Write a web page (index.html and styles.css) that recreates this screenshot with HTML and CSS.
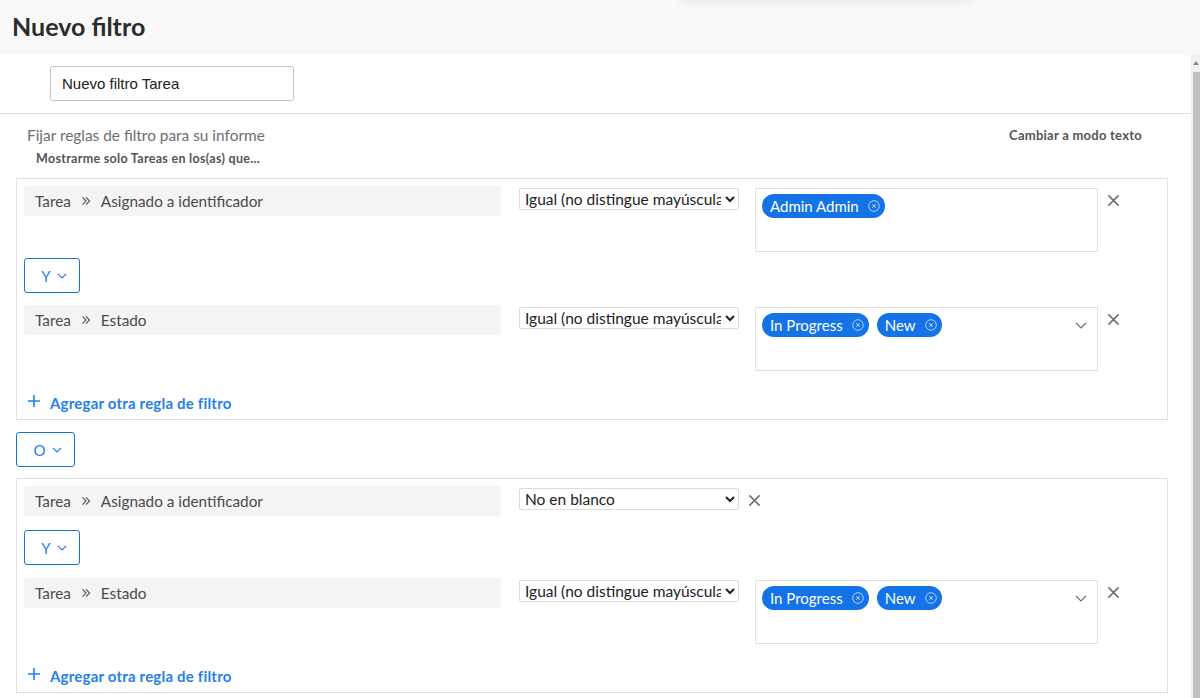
FILE: index.html
```html
<!DOCTYPE html>
<html lang="es">
<head>
<meta charset="utf-8">
<title>Nuevo filtro</title>
<link rel="stylesheet" href="styles.css">
</head>
<body>
<div class="page">
  <header class="header">
    <h1 class="title">Nuevo filtro</h1>
    <div class="ghost-popover"></div>
  </header>
  <div class="main">
    <div class="content">
      <div class="name-row">
        <input class="name-input" type="text" value="Nuevo filtro Tarea">
      </div>
      <div class="rules-head">
        <div class="rules-head-top">
          <span class="rules-title">Fijar reglas de filtro para su informe</span>
          <a class="text-mode">Cambiar a modo texto</a>
        </div>
        <div class="rules-sub">Mostrarme solo Tareas en los(as) que...</div>
      </div>

      <section class="group">
        <div class="rule">
          <div class="field">
            <span>Tarea</span>
            <svg class="dchev" viewBox="0 0 10 10" width="10" height="10"><path d="M1.5 1.3l3.6 3.7-3.6 3.7M5 1.3l3.6 3.7-3.6 3.7" fill="none" stroke="#555" stroke-width="1.1"/></svg>
            <span>Asignado a identificador</span>
          </div>
          <select class="op"><option>Igual (no distingue mayúsculas/minúsculas)</option></select>
          <div class="values">
            <div class="chips">
              <span class="chip">Admin Admin<svg class="chip-x" viewBox="0 0 12 12" width="12" height="12"><circle cx="6" cy="6" r="5.3" fill="none" stroke="#fff" stroke-opacity=".75" stroke-width=".9"/><path d="M4.2 4.2l3.6 3.6M7.8 4.2l-3.6 3.6" stroke="#fff" stroke-opacity=".85" stroke-width=".9"/></svg></span>
            </div>
          </div>
          <svg class="remove" viewBox="0 0 14 14" width="14" height="14"><path d="M1.5 1.5l11 11M12.5 1.5l-11 11" stroke="#6e6e6e" stroke-width="1.6"/></svg>
        </div>
        <button class="conj">Y<svg class="conj-chev" viewBox="0 0 10 6" width="10" height="6"><path d="M1 1l4 4 4-4" fill="none" stroke="#2680eb" stroke-width="1.2"/></svg></button>
        <div class="rule">
          <div class="field">
            <span>Tarea</span>
            <svg class="dchev" viewBox="0 0 10 10" width="10" height="10"><path d="M1.5 1.3l3.6 3.7-3.6 3.7M5 1.3l3.6 3.7-3.6 3.7" fill="none" stroke="#555" stroke-width="1.1"/></svg>
            <span>Estado</span>
          </div>
          <select class="op"><option>Igual (no distingue mayúsculas/minúsculas)</option></select>
          <div class="values">
            <div class="chips">
              <span class="chip">In Progress<svg class="chip-x" viewBox="0 0 12 12" width="12" height="12"><circle cx="6" cy="6" r="5.3" fill="none" stroke="#fff" stroke-opacity=".75" stroke-width=".9"/><path d="M4.2 4.2l3.6 3.6M7.8 4.2l-3.6 3.6" stroke="#fff" stroke-opacity=".85" stroke-width=".9"/></svg></span>
              <span class="chip">New<svg class="chip-x" viewBox="0 0 12 12" width="12" height="12"><circle cx="6" cy="6" r="5.3" fill="none" stroke="#fff" stroke-opacity=".75" stroke-width=".9"/><path d="M4.2 4.2l3.6 3.6M7.8 4.2l-3.6 3.6" stroke="#fff" stroke-opacity=".85" stroke-width=".9"/></svg></span>
            </div>
            <svg class="caret" viewBox="0 0 12 7" width="12" height="7"><path d="M1 1l5 5 5-5" fill="none" stroke="#6e6e6e" stroke-width="1.2"/></svg>
          </div>
          <svg class="remove" viewBox="0 0 14 14" width="14" height="14"><path d="M1.5 1.5l11 11M12.5 1.5l-11 11" stroke="#6e6e6e" stroke-width="1.6"/></svg>
        </div>
        <a class="add-rule"><svg class="plus" viewBox="0 0 12 12" width="12" height="12"><path d="M6 0v12M0 6h12" stroke="#2680eb" stroke-width="1.6"/></svg>Agregar otra regla de filtro</a>
      </section>

      <button class="conj conj-or">O<svg class="conj-chev" viewBox="0 0 10 6" width="10" height="6"><path d="M1 1l4 4 4-4" fill="none" stroke="#2680eb" stroke-width="1.2"/></svg></button>

      <section class="group">
        <div class="rule rule-short">
          <div class="field">
            <span>Tarea</span>
            <svg class="dchev" viewBox="0 0 10 10" width="10" height="10"><path d="M1.5 1.3l3.6 3.7-3.6 3.7M5 1.3l3.6 3.7-3.6 3.7" fill="none" stroke="#555" stroke-width="1.1"/></svg>
            <span>Asignado a identificador</span>
          </div>
          <select class="op"><option>No en blanco</option></select>
          <svg class="remove" viewBox="0 0 14 14" width="14" height="14"><path d="M1.5 1.5l11 11M12.5 1.5l-11 11" stroke="#6e6e6e" stroke-width="1.6"/></svg>
        </div>
        <button class="conj conj-last">Y<svg class="conj-chev" viewBox="0 0 10 6" width="10" height="6"><path d="M1 1l4 4 4-4" fill="none" stroke="#2680eb" stroke-width="1.2"/></svg></button>
        <div class="rule">
          <div class="field">
            <span>Tarea</span>
            <svg class="dchev" viewBox="0 0 10 10" width="10" height="10"><path d="M1.5 1.3l3.6 3.7-3.6 3.7M5 1.3l3.6 3.7-3.6 3.7" fill="none" stroke="#555" stroke-width="1.1"/></svg>
            <span>Estado</span>
          </div>
          <select class="op"><option>Igual (no distingue mayúsculas/minúsculas)</option></select>
          <div class="values">
            <div class="chips">
              <span class="chip">In Progress<svg class="chip-x" viewBox="0 0 12 12" width="12" height="12"><circle cx="6" cy="6" r="5.3" fill="none" stroke="#fff" stroke-opacity=".75" stroke-width=".9"/><path d="M4.2 4.2l3.6 3.6M7.8 4.2l-3.6 3.6" stroke="#fff" stroke-opacity=".85" stroke-width=".9"/></svg></span>
              <span class="chip">New<svg class="chip-x" viewBox="0 0 12 12" width="12" height="12"><circle cx="6" cy="6" r="5.3" fill="none" stroke="#fff" stroke-opacity=".75" stroke-width=".9"/><path d="M4.2 4.2l3.6 3.6M7.8 4.2l-3.6 3.6" stroke="#fff" stroke-opacity=".85" stroke-width=".9"/></svg></span>
            </div>
            <svg class="caret" viewBox="0 0 12 7" width="12" height="7"><path d="M1 1l5 5 5-5" fill="none" stroke="#6e6e6e" stroke-width="1.2"/></svg>
          </div>
          <svg class="remove" viewBox="0 0 14 14" width="14" height="14"><path d="M1.5 1.5l11 11M12.5 1.5l-11 11" stroke="#6e6e6e" stroke-width="1.6"/></svg>
        </div>
        <a class="add-rule"><svg class="plus" viewBox="0 0 12 12" width="12" height="12"><path d="M6 0v12M0 6h12" stroke="#2680eb" stroke-width="1.6"/></svg>Agregar otra regla de filtro</a>
      </section>
    </div>
    <div class="scrollbar">
      <div class="sb-up"><svg viewBox="0 0 6 4" width="6" height="4"><path d="M3 0L6 4H0z" fill="#8a8a8a"/></svg></div>
      <div class="sb-thumb"></div>
    </div>
  </div>
</div>
</body>
</html>
```

FILE: styles.css
```css
* { box-sizing: border-box; }
html, body { margin: 0; padding: 0; }
body {
  font-family: Lato, "Open Sans", sans-serif;
  color: #4b4b4b;
  background: #fff;
  overflow: hidden;
}
.page {
  width: 1200px;
  height: 698px;
  display: flex;
  flex-direction: column;
  overflow: hidden;
}
.header {
  position: relative;
  height: 55px;
  flex: none;
  background: #f9f9f9;
  display: flex;
  align-items: center;
  padding-left: 12px;
}
.title {
  margin: 0;
  font-size: 25px;
  font-weight: 700;
  color: #2c2c2c;
  padding-bottom: 4px;
}
.ghost-popover {
  position: absolute;
  left: 680px;
  top: -12px;
  width: 290px;
  height: 12px;
  box-shadow: 0 2px 8px rgba(0,0,0,0.07);
  background: #f9f9f9;
}
.main {
  flex: 1;
  display: flex;
  min-height: 0;
}
.content {
  flex: 1;
  min-width: 0;
}
.scrollbar {
  width: 9px;
  flex: none;
  background: #f1f1f1;
  display: flex;
  flex-direction: column;
}
.sb-up {
  height: 17px;
  display: flex;
  justify-content: flex-end;
  padding-top: 6px;
  padding-right: 1px;
}
.sb-up svg { display: block; }
.sb-thumb {
  flex: 1;
  margin-left: 2px;
  background: #c1c1c1;
}
.name-row {
  height: 59px;
  padding: 11px 0 0 50px;
  border-bottom: 1px solid #e1e1e1;
}
.name-input {
  width: 244px;
  height: 35px;
  border: 1px solid #c4c4c4;
  border-radius: 3px;
  padding: 0 11px;
  font-family: "Liberation Sans", Arial, sans-serif;
  font-size: 15px;
  color: #222;
  outline: none;
}
.rules-head {
  padding: 11px 49px 0 27px;
}
.rules-head-top {
  display: flex;
  justify-content: space-between;
  align-items: center;
  height: 20px;
}
.rules-title {
  font-size: 15.4px;
  color: #6e6e6e;
}
.text-mode {
  font-size: 13px;
  letter-spacing: 0.25px;
  font-weight: 700;
  color: #555;
}
.rules-sub {
  margin-top: 6px;
  padding-left: 9px;
  font-size: 12.5px;
  letter-spacing: 0.3px;
  font-weight: 700;
  color: #555;
  line-height: 16px;
}
.group {
  margin: 11px 23px 0 16px;
  border: 1px solid #e1e1e1;
  padding: 7px 7px 6px;
}
.rule {
  display: flex;
  align-items: flex-start;
}
.rule-short { min-height: 38px; }
.field {
  width: 477px;
  height: 30px;
  flex: none;
  background: #f4f4f4;
  border-radius: 3px;
  padding-left: 11px;
  display: flex;
  align-items: center;
  gap: 10px;
  font-size: 15.3px;
  color: #4b4b4b;
}
.dchev { display: block; flex: none; }
.op {
  margin: 2px 0 0 18px;
  width: 220px;
  height: 22px;
  flex: none;
  border: 1px solid #dcdcdc;
  border-radius: 2px;
  background: #fff;
  font-family: Lato, "Open Sans", sans-serif;
  font-size: 15.5px;
  color: #222;
  padding: 0 1px;
}
.values {
  margin: 2px 0 0 16px;
  width: 343px;
  height: 64px;
  flex: none;
  border: 1px solid #e1e1e1;
  padding: 5px 10px 5px 6px;
  display: flex;
  align-items: flex-start;
}
.chips {
  flex: 1;
  display: flex;
  flex-wrap: wrap;
  gap: 8px;
}
.chip {
  height: 24px;
  border-radius: 12px;
  background: #1473e6;
  color: #fff;
  font-size: 15px;
  display: inline-flex;
  align-items: center;
  gap: 9px;
  padding: 0 5px 0 8px;
}
.chip-x { display: block; flex: none; }
.caret {
  display: block;
  margin-top: 9px;
  flex: none;
}
.remove {
  display: block;
  flex: none;
  margin: 8px 0 0 9px;
  width: 13px;
  height: 13px;
}
.conj {
  display: flex;
  align-items: center;
  justify-content: center;
  gap: 6px;
  width: 56px;
  height: 35px;
  margin: 6px 0 12px;
  border: 1px solid #1473e6;
  border-radius: 3px;
  background: #fff;
  padding: 0 0 0 4px;
  font-family: Lato, "Open Sans", sans-serif;
  font-size: 15px;
  color: #2680eb;
}
.conj-last { margin-bottom: 13px; }
.conj-chev { display: block; }
.conj-or {
  width: 59px;
  margin: 12px 0 11px 16px;
}
.add-rule {
  display: flex;
  align-items: center;
  gap: 10px;
  height: 20px;
  margin-top: 22px;
  padding-left: 4px;
  font-size: 15px;
  letter-spacing: 0.2px;
  font-weight: 700;
  color: #2680eb;
}
.plus { display: block; margin-top: -5px; }
```
